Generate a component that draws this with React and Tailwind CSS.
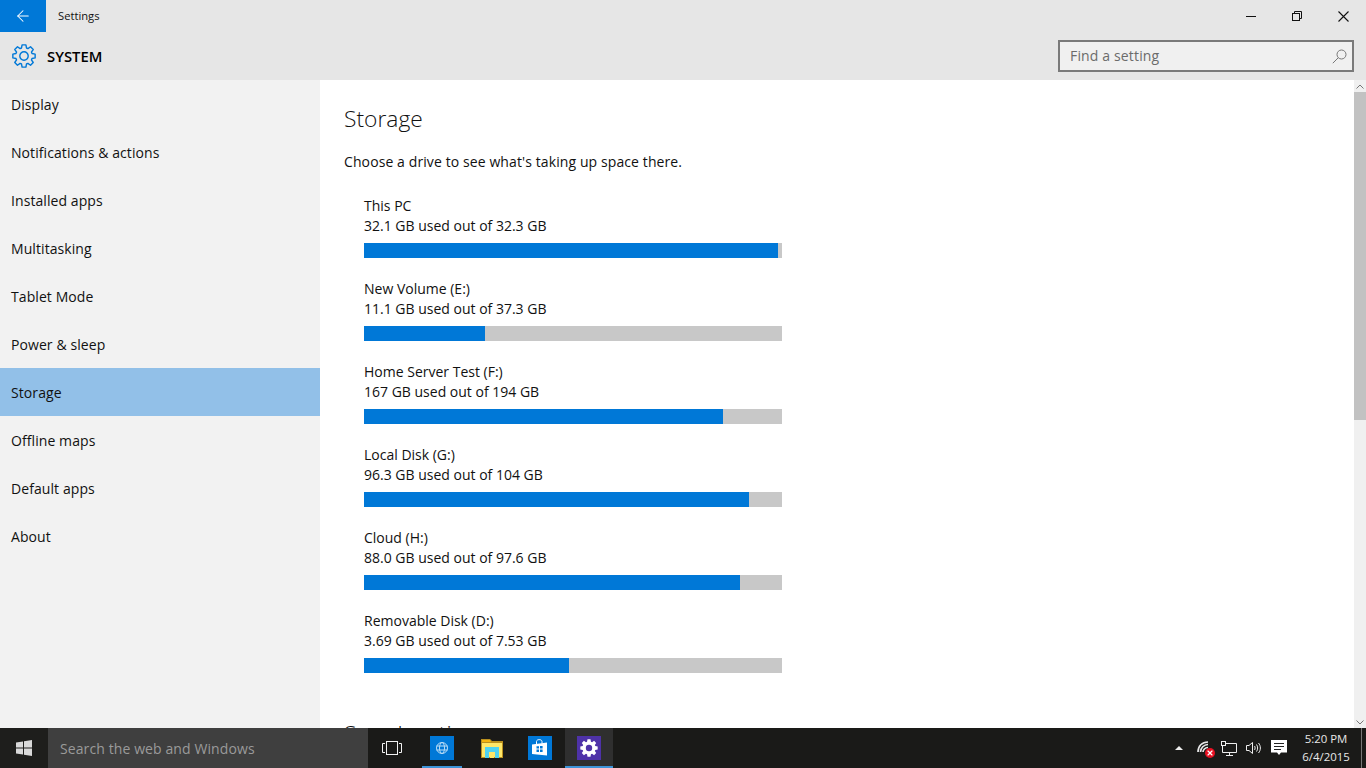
import React from "react";
import { ArrowLeft, X } from "lucide-react";

const navItems = [
  "Display",
  "Notifications & actions",
  "Installed apps",
  "Multitasking",
  "Tablet Mode",
  "Power & sleep",
  "Storage",
  "Offline maps",
  "Default apps",
  "About",
];

const drives = [
  { name: "This PC", usage: "32.1 GB used out of 32.3 GB", used: 414 },
  { name: "New Volume (E:)", usage: "11.1 GB used out of 37.3 GB", used: 121 },
  { name: "Home Server Test (F:)", usage: "167 GB used out of 194 GB", used: 359 },
  { name: "Local Disk (G:)", usage: "96.3 GB used out of 104 GB", used: 385 },
  { name: "Cloud (H:)", usage: "88.0 GB used out of 97.6 GB", used: 376 },
  { name: "Removable Disk (D:)", usage: "3.69 GB used out of 7.53 GB", used: 205 },
];

// 8 tooth gear outline, centred on 0,0
const gearPath = (outer, inner) => {
  const pts = [];
  for (let i = 0; i < 8; i++) {
    const a = (i * Math.PI) / 4;
    [
      [-0.3, inner],
      [-0.17, outer],
      [0.17, outer],
      [0.3, inner],
    ].forEach(([da, r]) => {
      pts.push(`${(r * Math.cos(a + da)).toFixed(2)} ${(r * Math.sin(a + da)).toFixed(2)}`);
    });
  }
  return `M${pts.join("L")}Z`;
};

const GearOutline = () => (
  <svg width="24" height="24" viewBox="-12 -12 24 24" fill="none" stroke="#0078d7" strokeWidth="1.4" strokeLinejoin="round">
    <path d={gearPath(11.3, 8.4)} />
    <circle r="4.2" />
  </svg>
);

const MinimizeIcon = () => (
  <svg width="10" height="10" viewBox="0 0 10 10" stroke="#111" strokeWidth="1">
    <path d="M0 5.5H10" />
  </svg>
);

const RestoreIcon = () => (
  <svg width="10" height="10" viewBox="0 0 10 10" fill="none" stroke="#111" strokeWidth="1">
    <rect x="0.5" y="2.5" width="7" height="7" />
    <path d="M2.5 2.5V0.5H9.5V7.5H7.5" />
  </svg>
);

const CloseIcon = () => (
  <svg width="11" height="11" viewBox="0 0 11 11" stroke="#111" strokeWidth="1.1">
    <path d="M0.5 0.5L10.5 10.5M10.5 0.5L0.5 10.5" />
  </svg>
);

const SearchGlass = () => (
  <svg width="15" height="15" viewBox="0 0 15 15" fill="none" stroke="#777" strokeWidth="1">
    <circle cx="9.5" cy="5.5" r="4.5" />
    <path d="M6.2 8.8L0.8 14.2" />
  </svg>
);

const WindowsLogo = () => (
  <svg width="16" height="16" viewBox="0 0 16 16" fill="#d9d9d9">
    <path d="M0 2.4 7 1.4V7.5H0ZM8 1.2 16 0V7.5H8ZM0 8.5H7V14.6L0 13.6ZM8 8.5H16V16L8 14.8Z" />
  </svg>
);

const TaskView = () => (
  <svg width="20" height="14" viewBox="0 0 20 14" fill="none" stroke="#f2f2f2" strokeWidth="1">
    <rect x="4.5" y="0.5" width="11" height="13" />
    <path d="M3 2.5H0.5V11.5H3M17 2.5H19.5V11.5H17" />
  </svg>
);

const GlobeTile = () => (
  <div className="w-6 h-6 bg-[#0078d7] flex items-center justify-center">
    <svg width="14" height="14" viewBox="0 0 14 14" fill="none" stroke="#b9dcf6" strokeWidth="1">
      <circle cx="7" cy="7" r="5.5" />
      <ellipse cx="7" cy="7" rx="2.5" ry="5.5" />
      <path d="M1.5 5H12.5M1.5 9H12.5" />
    </svg>
  </div>
);

const FolderIcon = () => (
  <svg width="22" height="19" viewBox="0 0 22 19">
    <path d="M0 0H9L11 2H22V19H0Z" fill="#b98f1e" />
    <path d="M1 4H21V18H1Z" fill="#ffe768" />
    <path d="M1 1H9L10 3H1Z" fill="#f5b50f" />
    <path d="M4 8H18V19H14V13H8V19H4Z" fill="#4fd3f0" />
    <path d="M9 14H13V19H9Z" fill="#ffe768" />
  </svg>
);

const StoreTile = () => (
  <div className="w-6 h-6 bg-[#0078d7] flex items-center justify-center">
    <svg width="18" height="18" viewBox="0 0 18 18">
      <path d="M1 5.5 16 3.5V16.5L1 15Z" fill="#fff" />
      <path d="M5.5 5V2.5C5.5 0 11 0 11 2.5V4.5" fill="none" stroke="#fff" strokeWidth="1" />
      <path d="M5.5 7.2H8V9.6H5.5ZM9 7H11.6V9.5H9ZM5.5 10.5H8V12.9H5.5ZM9 10.5H11.6V13H9Z" fill="#0078d7" />
    </svg>
  </div>
);

const SettingsTile = () => (
  <div className="w-6 h-6 bg-[#4e32a8] flex items-center justify-center">
    <svg width="18" height="18" viewBox="-9 -9 18 18">
      <path d={gearPath(8.8, 6.6)} fill="#fff" />
      <circle r="3.2" fill="#4e32a8" />
    </svg>
  </div>
);

const NetworkOff = () => (
  <div className="relative w-4 h-4">
    <svg width="14" height="14" viewBox="0 0 14 14" fill="none" stroke="#e8e8e8" strokeWidth="1.7">
      <path d="M1 12C1 6 5 2 11 2M3.5 12C3.5 8 7 4.5 11 4.5M6 12C6 10 8 7.5 11 7.5" />
    </svg>
    <div className="absolute right-[-2px] bottom-[-2px] w-[10px] h-[10px] rounded-full bg-[#e81123] flex items-center justify-center">
      <X size={8} color="#fff" strokeWidth={3.5} />
    </div>
  </div>
);

const MonitorIcon = () => (
  <svg width="16" height="15" viewBox="0 0 16 15" fill="none" stroke="#eee" strokeWidth="1">
    <path d="M4.5 2.5H15.5V11.5H1.5V5" />
    <rect x="0.5" y="0.5" width="4" height="4" />
    <path d="M8.5 11.5V14M5 14.5H12" />
  </svg>
);

const SpeakerIcon = () => (
  <svg width="16" height="14" viewBox="0 0 16 14" fill="none" stroke="#eee" strokeWidth="1">
    <path d="M0.5 4.5H3L6.5 1.5V12.5L3 9.5H0.5Z" />
    <path d="M8.5 5C9.3 6 9.3 8 8.5 9M10.5 3.5C12 5.5 12 8.5 10.5 10.5M12.5 2C15 5 15 9 12.5 12" />
  </svg>
);

const MessageIcon = () => (
  <svg width="16" height="16" viewBox="0 0 16 16">
    <path d="M0 0H16V12.5H10L8 15L6 12.5H0Z" fill="#fff" />
    <path d="M3 3.5H13M3 6.5H13M3 9.5H10" stroke="#222" strokeWidth="1" />
  </svg>
);

const App = () => {
  return (
    <div className="h-screen w-full flex flex-col overflow-hidden font-['Open_Sans','Noto_Sans',sans-serif] text-[#111]">
      {/* Title bar */}
      <div className="h-8 shrink-0 bg-[#e6e6e6] flex items-center">
        <div className="w-[46px] h-8 bg-[#0078d7] flex items-center justify-center">
          <ArrowLeft size={18} color="#fff" strokeWidth={1.4} />
        </div>
        <span className="ml-3 text-[11.2px]">Settings</span>
        <div className="ml-auto flex items-center">
          <div className="w-[46px] flex justify-center"><MinimizeIcon /></div>
          <div className="w-[46px] flex justify-center"><RestoreIcon /></div>
          <div className="w-[46px] flex justify-center"><CloseIcon /></div>
        </div>
      </div>

      {/* Section header */}
      <div className="h-12 shrink-0 bg-[#e6e6e6] flex items-center pl-3 pr-3">
        <GearOutline />
        <span className="ml-[11px] text-[14.8px] font-semibold text-black">SYSTEM</span>
        <div className="ml-auto w-[296px] h-8 bg-[#f0f0f0] border-2 border-[#7a7a7a] flex items-center justify-between pl-[10px] pr-[5px]">
          <span className="text-[14px] tracking-[0.15px] text-[#6b6b6b] pb-[2px]">Find a setting</span>
          <SearchGlass />
        </div>
      </div>

      {/* Body */}
      <div className="flex-1 flex min-h-0">
        <nav className="w-80 shrink-0 bg-[#f2f2f2]">
          {navItems.map((item) => (
            <div
              key={item}
              className={`h-12 flex items-center pl-[11px] text-[14px] tracking-[0.08px] ${item === "Storage" ? "bg-[#92c0e8]" : ""}`}
            >
              {item}
            </div>
          ))}
        </nav>

        <main className="flex-1 bg-white overflow-hidden pl-6 pt-[23px]">
          <h1 className="text-[22.8px] leading-8 font-light">Storage</h1>
          <p className="mt-[17px] text-[14px] tracking-[0.1px] leading-5">Choose a drive to see what's taking up space there.</p>
          <div className="mt-6 ml-5 flex flex-col gap-[21px]">
            {drives.map((d) => (
              <div key={d.name} className="w-[418px]">
                <div className="text-[14px] leading-5">{d.name}</div>
                <div className="text-[14px] leading-5">{d.usage}</div>
                <div className="mt-[7px] h-[15px] bg-[#c8c8c8]">
                  <div className="h-full bg-[#0078d7]" style={{ width: d.used }} />
                </div>
              </div>
            ))}
          </div>
          <h2 className="mt-[45px] text-[22.8px] leading-8 font-light">Save locations</h2>
        </main>

        {/* Scrollbar */}
        <div className="w-3 shrink-0 bg-[#f0f0f0] flex flex-col">
          <div className="h-3 flex items-center justify-center">
            <svg width="8" height="5" viewBox="0 0 8 5" fill="none" stroke="#777" strokeWidth="1">
              <path d="M0.5 4.5L4 1L7.5 4.5" />
            </svg>
          </div>
          <div className="h-[328px] bg-[#c2c2c2]" />
          <div className="mt-auto h-3 flex items-center justify-center">
            <svg width="8" height="5" viewBox="0 0 8 5" fill="none" stroke="#777" strokeWidth="1">
              <path d="M0.5 0.5L4 4L7.5 0.5" />
            </svg>
          </div>
        </div>
      </div>

      {/* Taskbar */}
      <div className="h-10 shrink-0 bg-[#1a1a18] flex items-center text-white">
        <div className="w-12 h-10 bg-[#1e1e1c] flex items-center justify-center">
          <WindowsLogo />
        </div>
        <div className="w-[320px] h-10 bg-[#3f3f3f] flex items-center pl-3 text-[14px] tracking-[0.1px] text-[#9a9a9a]">
          Search the web and Windows
        </div>
        <div className="w-12 h-10 flex items-center justify-center">
          <TaskView />
        </div>
        <div className="relative w-[52px] h-10 flex items-center justify-center">
          <GlobeTile />
          <div className="absolute bottom-0 left-[6px] w-10 h-0.5 bg-[#3d94d8]" />
        </div>
        <div className="w-[47px] h-10 flex items-center justify-center">
          <FolderIcon />
        </div>
        <div className="w-[50px] h-10 flex items-center justify-center">
          <StoreTile />
        </div>
        <div className="relative w-12 h-10 flex items-center justify-center bg-[#2f2f2f]">
          <SettingsTile />
          <div className="absolute bottom-0 left-0 w-12 h-0.5 bg-[#3d94d8]" />
        </div>
        <div className="ml-auto flex items-center h-10">
          <svg width="8" height="4" viewBox="0 0 8 4" fill="#eee" className="mr-[14px]">
            <path d="M0 4 4 0 8 4Z" />
          </svg>
          <div className="mr-2"><NetworkOff /></div>
          <div className="mr-[9px]"><MonitorIcon /></div>
          <div className="mr-[9px]"><SpeakerIcon /></div>
          <div className="mr-2"><MessageIcon /></div>
          <div className="w-[62px] mr-1 flex flex-col items-center text-[11.4px] leading-[18px] text-[#e8e8e8]">
            <span>5:20 PM</span>
            <span>6/4/2015</span>
          </div>
          <div className="w-px h-10 bg-[#777]" />
          <div className="w-1" />
        </div>
      </div>
    </div>
  );
};

export default App;
